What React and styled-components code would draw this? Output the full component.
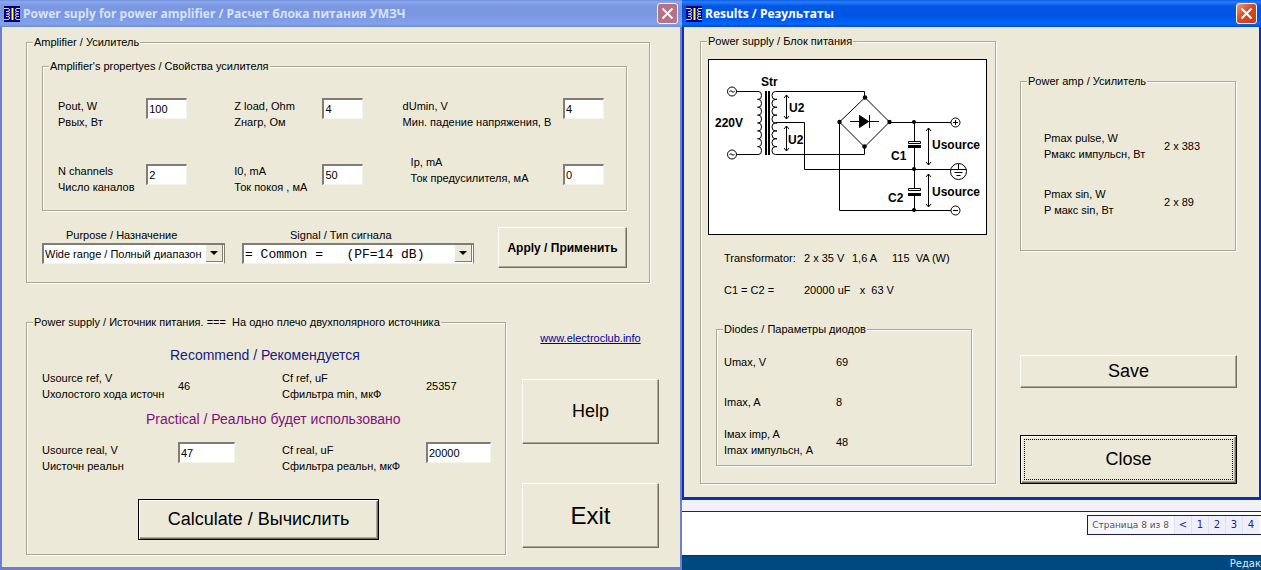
import React from "react";
import styled, { createGlobalStyle, css } from "styled-components";

const GlobalStyle = createGlobalStyle`
  * {
    box-sizing: border-box;
  }

  body {
    margin: 0;
    overflow: hidden;
    background: #fff;
    color: #000;
    font-family: "Liberation Sans", Arial, sans-serif;
    font-size: 11px;
    line-height: 16px;
  }
`;

const Desktop = styled.div`
  display: grid;
  grid-template-columns: minmax(0, 682fr) minmax(0, 579fr);
  min-height: 100vh;
`;

const Side = styled.div`
  display: flex;
  flex-direction: column;
`;

const Window = styled.section`
  display: flex;
  flex-direction: column;
  background: #ece9d8;
  border: solid ${(p) => (p.$active ? "#0831b4" : "#6a7fce")};
  border-width: 0 2px 3px;
`;

const TitleBar = styled.header`
  display: flex;
  align-items: center;
  gap: 3px;
  height: 27px;
  margin: 0 -2px;
  padding: 0 4px;
  color: ${(p) => (p.$active ? "#fff" : "#d8e4f8")};
  background: ${(p) =>
    p.$active
      ? "linear-gradient(#0a5ce8, #2a7df5 2px, #0057e5 6px, #0054e3 16px, #0066ff 24px, #0049c8)"
      : "linear-gradient(#7390dc, #8aa8ee 2px, #7a97e0 6px, #7b99e3 16px, #84a2ec 24px, #6c8cd8)"};
`;

const Title = styled.h1`
  flex: 1;
  margin: 0;
  font-family: "Open Sans", "Trebuchet MS", sans-serif;
  font-size: 12px;
  font-weight: 700;
  line-height: 20px;
  white-space: nowrap;
`;

const CloseBox = styled.button`
  display: flex;
  align-items: center;
  justify-content: center;
  width: 21px;
  height: 21px;
  padding: 0;
  color: #fff;
  border: 1px solid #fff;
  border-radius: 3px;
  background: ${(p) => (p.$active ? "linear-gradient(135deg, #f09a80, #dc4a25 45%, #c83a14)" : "#b8707c")};
  opacity: ${(p) => (p.$active ? 1 : 0.9)};
`;

const MainBody = styled.div`
  display: flex;
  flex-direction: column;
  gap: 32px;
  padding: 8px 21px 12px 24px;
`;

const ResultsBody = styled.div`
  display: grid;
  grid-template-columns: minmax(0, 296fr) minmax(0, 217fr);
  column-gap: 24px;
  padding: 7px 22px 13px 16px;
`;

const Group = styled.fieldset`
  --edge: 0px;
  min-width: 0;
  margin: 0;
  padding: 0 0 0 var(--edge);
  border: 1px solid #aca899;
  box-shadow: 1px 1px 0 #fff, inset 1px 1px 0 #fff;
`;

const Legend = styled.legend`
  margin-left: calc(6px - var(--edge));
  padding: 0 1px;
  line-height: 14px;
  white-space: pre;
  background: #ece9d8;
`;

const AmplifierGroup = styled(Group)`
  --edge: 15px;
  margin-right: 9px;
  padding: 10px 22px 14px var(--edge);
`;

const Properties = styled(Group)`
  --edge: 15px;
  padding: 25px 15px 15px var(--edge);
`;

const PropertyGrid = styled.div`
  display: grid;
  grid-template-columns:
    minmax(0, 88fr) minmax(0, 88fr) minmax(0, 88fr)
    minmax(0, 80fr) minmax(0, 160fr) minmax(0, 48fr);
  grid-template-rows: 32px 41px;
  row-gap: 24px;
`;

const Caption = styled.label`
  align-self: ${(p) => p.$align || "start"};
  padding-left: ${(p) => (p.$indent ? "8px" : 0)};
  white-space: pre;
`;

const Value = styled.output`
  align-self: center;
  white-space: pre;
`;

const Field = styled.input`
  align-self: ${(p) => p.$align || "start"};
  width: ${(p) => p.$width || 41}px;
  height: 21px;
  padding: 0 1px 1px;
  font: inherit;
  color: #000;
  background: #fff;
  border: solid;
  border-width: 2px 1px 1px 2px;
  border-color: #807e72 #f6f4ea #f6f4ea #807e72;
  border-radius: 0;
  outline: 0;
`;

const ModeRow = styled.div`
  display: grid;
  grid-template-columns: minmax(0, 432fr) minmax(0, 129fr);
  column-gap: 24px;
  margin-top: 16px;
`;

const Modes = styled.div`
  display: grid;
  grid-template-columns: minmax(0, 183fr) minmax(0, 232fr);
  column-gap: 17px;
`;

const Mode = styled.div`
  display: flex;
  flex-direction: column;

  label {
    padding-left: ${(p) => p.$indent}px;
  }
`;

const Combo = styled.span`
  display: grid;
  grid-template-columns: minmax(0, 1fr) 18px;
  height: 21px;
  background: #fff;
  border: solid;
  border-width: 2px 1px 1px 2px;
  border-color: #807e72 #807e72 #f6f4ea #807e72;

  select {
    grid-area: 1 / 1 / 2 / 3;
    appearance: none;
    width: 100%;
    padding: 0 18px 0 1px;
    font: ${(p) => (p.$mono ? '13px "Liberation Mono", monospace' : "inherit")};
    color: #000;
    background: transparent;
    border: 0;
    outline: 0;
  }

  svg {
    grid-area: 1 / 2;
    align-self: stretch;
    height: 17px;
    width: 17px;
    background: #ece9d8;
    border-right: 1px solid #807e72;
    border-bottom: 1px solid #807e72;
    pointer-events: none;
  }
`;

const Button = styled.button`
  height: ${(p) => p.$height || 41}px;
  padding: 0;
  font-family: inherit;
  font-size: ${(p) => p.$size || 18}px;
  font-weight: ${(p) => (p.$bold ? 700 : 400)};
  color: #000;
  background: #ece9d8;
  border: 1px solid;
  border-color: #fff #716f64 #716f64 #fff;
  border-radius: 0;
  box-shadow: inset -1px -1px 0 #aca899;
  white-space: nowrap;

  ${(p) =>
    p.$default &&
    css`
      border-color: #000;
      box-shadow: inset 1px 1px 0 #fff, inset -1px -1px 0 #716f64, inset -2px -2px 0 #aca899;
    `}

  ${(p) =>
    p.$focused &&
    css`
      outline: 1px dotted #000;
      outline-offset: -5px;
    `}
`;

const Lower = styled.div`
  display: grid;
  grid-template-columns: minmax(0, 480fr) minmax(0, 137fr);
  column-gap: 16px;
`;

const SupplyGroup = styled(Group)`
  --edge: 15px;
  padding: 18px 15px 14px var(--edge);
`;

const Heading = styled.h2`
  margin: 0;
  padding-left: ${(p) => p.$indent}px;
  color: ${(p) => p.$color};
  font-size: 14px;
  font-weight: 400;
  line-height: 16px;
  white-space: nowrap;
`;

const SupplyRow = styled.div`
  display: grid;
  grid-template-columns: minmax(0, 136fr) minmax(0, 104fr) minmax(0, 144fr) minmax(0, 64fr);
  margin: ${(p) => p.$margin};
`;

const Calculate = styled(Button)`
  display: block;
  width: 241px;
  margin-left: 96px;
`;

const Actions = styled.div`
  display: flex;
  flex-direction: column;
  padding: 15px 0 6px;
`;

const SiteLink = styled.a`
  align-self: center;
  margin-bottom: 33px;
  color: #0000a0;
`;

const Exit = styled(Button)`
  margin-top: 39px;
`;

const OutputGroup = styled(Group)`
  --edge: 7px;
  padding: 11px 8px 16px var(--edge);
`;

const Circuit = styled.svg`
  display: block;
  width: 100%;
  height: auto;
  background: #fff;
  border: 1px solid #000;
  fill: none;
  stroke: #000;

  text {
    fill: #000;
    stroke: none;
    font-weight: 700;
    font-size: 12px;
  }
`;

const OutputRow = styled.div`
  display: grid;
  grid-template-columns: 80px ${(p) => p.$columns};
  margin: 15px 0 16px 16px;
  white-space: pre;
`;

const DiodeGroup = styled(Group)`
  --edge: 7px;
  margin: 24px 15px 0 8px;
  padding: 18px 7px 7px var(--edge);
`;

const DiodeRow = styled.div`
  display: grid;
  grid-template-columns: 112px 1fr;
  margin-bottom: ${(p) => p.$gap || 0}px;
`;

const AmpColumn = styled.div`
  display: flex;
  flex-direction: column;
  padding-top: 40px;
`;

const AmpGroup = styled(Group)`
  --edge: 23px;
  margin-right: 1px;
  padding: 42px 23px 32px var(--edge);
`;

const AmpRow = styled.div`
  display: grid;
  grid-template-columns: 120px 1fr;

  & + & {
    margin-top: 24px;
  }
`;

const Save = styled(Button)`
  margin: 104px 0 47px;
`;

const Forum = styled.footer`
  flex: 1;
  display: flex;
  flex-direction: column;
  font-family: "DejaVu Sans", Verdana, sans-serif;
  font-size: 10px;
  line-height: 18px;
  background: #f2f1fa;
`;

const PagerStrip = styled.nav`
  flex: 1;
  display: flex;
  justify-content: flex-end;
  align-items: flex-start;
  margin-top: 11px;
  padding-top: 3px;
  overflow: hidden;
  background: #fff;
  border: solid #1b2a5c;
  border-width: 1px 0;
`;

const Pager = styled.div`
  display: flex;
  padding-right: 2px;
  background: #f7f7fb;
  border: 1px solid #1b1b5c;
  border-right: 0;
  color: #555;

  span {
    padding: 0 5px 0 4px;
    font-size: 9px;
    white-space: nowrap;
  }

  a {
    width: 17px;
    color: #22229c;
    text-align: center;
    text-decoration: none;
    background: #efeffa;
    border-left: 1px solid #e0e0ee;
  }
`;

const BlueStrip = styled.div`
  height: 14px;
  padding-top: 2px;
  overflow: hidden;
  color: #d8ecff;
  line-height: 12px;
  text-align: right;
  background: #004880;
`;

function CoilIcon() {
  return (
    <svg width="16" height="16" viewBox="0 0 16 16" fill="none" stroke="#d8dcf0" aria-hidden="true">
      <path fill="#00007c" stroke="none" d="M0 0h16v16H0z" />
      <path d="M0 2.500h4q1.500 0 1.500 1.500t-2.500 1.500M2 5.500h2q1.500 0 1.500 1.250T3 8h-1M3 8h1q1.500 0 1.500 1.250T3.500 10.500H2M4 10.500q1.500 0 1.500 1.500t-1.500 1.500H0" />
      <path d="M16 2.500h-3q-1.500 0-1.500 1.500t2.500 1.500M15 5.500h-2q-1.500 0-1.500 1.250T14 8h1M14 8h-1q-1.500 0-1.500 1.250T13.500 10.500H15M13 10.500q-1.500 0-1.500 1.500t1.500 1.500H16" />
      <path stroke="#ffff3c" strokeWidth="2" d="M8.500 2v12" />
    </svg>
  );
}

function CrossIcon() {
  return (
    <svg width="13" height="13" viewBox="0 0 13 13" stroke="currentColor" strokeWidth="2" aria-hidden="true">
      <path d="M1.500 1.500l10 10M11.500 1.500l-10 10" />
    </svg>
  );
}

function ComboArrow() {
  return (
    <svg viewBox="0 0 16 16" aria-hidden="true">
      <path d="M4 6h8l-4 4z" />
    </svg>
  );
}

function Arrow({ x, from, to }) {
  return (
    <path
      d={`M${x} ${from}V${to}M${x - 2.5} ${from + 3}L${x} ${from}l2.500 3M${x - 2.5} ${to - 3}L${x} ${to}l2.500-3`}
    />
  );
}

function CircuitDrawing() {
  const turns = [0, 1, 2, 3, 4, 5, 6, 7];
  return (
    <Circuit viewBox="9 10 277 174" role="img" aria-label="Power supply circuit">
      {/* mains input */}
      {[41.5, 104.5].map((y) => (
        <g key={y}>
          <circle cx="32" cy={y} r="4.500" />
          <path d={`M29.500 ${y + 0.5}q1.200-2.500 2.500-0.500t2.500-0.500M36.500 ${y}H59`} />
        </g>
      ))}
      {/* transformer */}
      {turns.map((n) => (
        <path key={n} d={`M57.500 ${41.5 + n * 7.875}h1a3 3.900 0 0 1 0 7.875h-1`} />
      ))}
      {turns.map((n) => (
        <path key={n} d={`M77 ${41.5 + n * 7.875}h-1.500a3.500 3.900 0 0 0 0 7.875h1.500`} />
      ))}
      <path strokeWidth="2" d="M66 41v64M69 41v64" />
      <Arrow x={86.5} from={45} to={69} />
      <Arrow x={86.5} from={76} to={101} />
      {/* wires */}
      <path d="M76 41.500H164.500V48M76 104.500H164.500V97M76 72.500H104.500V119.500H251M139.500 72V160.500H251M189 72.500H251" />
      {/* bridge */}
      <path d="M165 47.500L189.500 72 164.500 97 139.500 72z" />
      <path d="M150 71.500h29M169.500 65v13" />
      <path fill="#000" d="M159.500 65.500v12l9-6z" />
      {/* filter */}
      <path d="M214.500 72v19M214.500 98v40M214.500 146v15M208.500 91.500h12v2h-12zM208.500 138.500h12v2h-12z" />
      <path fill="#000" stroke="none" d="M208 95h13v3h-13zM208 143h13v3h-13z" />
      <g fill="#000" stroke="none">
        <circle cx="165" cy="47.500" r="2.200" />
        <circle cx="189.500" cy="72" r="2.200" />
        <circle cx="164.500" cy="96.500" r="2.200" />
        <circle cx="139.500" cy="72" r="2.200" />
        <circle cx="214" cy="72" r="2" />
        <circle cx="214" cy="119" r="2" />
        <circle cx="214" cy="160" r="2" />
      </g>
      <Arrow x={228.5} from={78} to={115} />
      <Arrow x={228.5} from={124} to={157} />
      {/* outputs */}
      <circle cx="255.500" cy="72.500" r="4.500" />
      <path d="M253 72.500h5M255.500 70v5" />
      <circle cx="258.500" cy="121.500" r="8" />
      <path d="M250 119.500h16.500M258.500 114v6M254.500 122.500h8M256.500 125.500h4" />
      <circle cx="255.500" cy="160.500" r="4.500" />
      <path d="M253 160.500h5" />
      <text x="61" y="36">Str</text>
      <text x="15" y="77">220V</text>
      <text x="89" y="62">U2</text>
      <text x="88" y="94">U2</text>
      <text x="191" y="110">C1</text>
      <text x="188" y="152">C2</text>
      <text x="232" y="99">Usource</text>
      <text x="232" y="146">Usource</text>
    </Circuit>
  );
}

function Property({ id, text, value, row, indent }) {
  return (
    <>
      <Caption htmlFor={id} $align={row === 2 && !indent ? "end" : "start"} $indent={indent}>
        {text}
      </Caption>
      <Field id={id} defaultValue={value} $align={row === 2 ? "center" : "start"} />
    </>
  );
}

function MainWindow() {
  return (
    <Window>
      <TitleBar>
        <CoilIcon />
        <Title>Power suply for power amplifier / Расчет блока питания УМЗЧ</Title>
        <CloseBox type="button" aria-label="Close window">
          <CrossIcon />
        </CloseBox>
      </TitleBar>
      <MainBody>
        <AmplifierGroup>
          <Legend>Amplifier / Усилитель</Legend>
          <Properties>
            <Legend>Amplifier's propertyes / Свойства усилителя</Legend>
            <PropertyGrid>
              <Property id="pout" text={"Pout, W\nPвых, Вт"} value="100" row={1} />
              <Property id="zload" text={"Z load, Ohm\nZнагр, Ом"} value="4" row={1} />
              <Property id="dumin" text={"dUmin, V\nМин. падение напряжения, В"} value="4" row={1} />
              <Property id="channels" text={"N channels\nЧисло каналов"} value="2" row={2} />
              <Property id="i0" text={"I0, mA\nТок покоя , мА"} value="50" row={2} />
              <Property id="ip" text={"Ip, mA\nТок предусилителя, мА"} value="0" row={2} indent />
            </PropertyGrid>
          </Properties>
          <ModeRow>
            <Modes>
              <Mode $indent={24}>
                <label htmlFor="purpose">Purpose / Назначение</label>
                <Combo>
                  <select id="purpose">
                    <option>Wide range / Полный диапазон</option>
                  </select>
                  <ComboArrow />
                </Combo>
              </Mode>
              <Mode $indent={48}>
                <label htmlFor="signal">Signal / Тип сигнала</label>
                <Combo $mono>
                  <select id="signal">
                    <option>{"= Common =\u00a0\u00a0\u00a0(PF=14 dB)"}</option>
                  </select>
                  <ComboArrow />
                </Combo>
              </Mode>
            </Modes>
            <Button type="button" $size={12} $bold>
              Apply / Применить
            </Button>
          </ModeRow>
        </AmplifierGroup>
        <Lower>
          <SupplyGroup>
            <Legend>{"Power supply / Источник питания. ===  На одно плечо двухполярного источника"}</Legend>
            <Heading $indent={128} $color="#1a1a80">
              Recommend / Рекомендуется
            </Heading>
            <SupplyRow $margin="7px 0 9px">
              <Caption as="span">{"Usource ref, V\nUхолостого хода источн"}</Caption>
              <Value>46</Value>
              <Caption as="span">{"Cf ref, uF\nCфильтра min, мкФ"}</Caption>
              <Value>25357</Value>
            </SupplyRow>
            <Heading $indent={104} $color="#80107c">
              Practical / Реально будет использовано
            </Heading>
            <SupplyRow $margin="15px 0 25px">
              <Caption htmlFor="usource">{"Usource real, V\nUисточн реальн"}</Caption>
              <Field id="usource" defaultValue="47" $width={57} />
              <Caption htmlFor="cf">{"Cf real, uF\nCфильтра реальн, мкФ"}</Caption>
              <Field id="cf" defaultValue="20000" $width={65} />
            </SupplyRow>
            <Calculate type="button" $default>
              Calculate / Вычислить
            </Calculate>
          </SupplyGroup>
          <Actions>
            <SiteLink href="#site">www.electroclub.info</SiteLink>
            <Button type="button" $height={65}>
              Help
            </Button>
            <Exit type="button" $height={65} $size={24}>
              Exit
            </Exit>
          </Actions>
        </Lower>
      </MainBody>
    </Window>
  );
}

function ResultsWindow() {
  return (
    <Window $active>
      <TitleBar $active>
        <CoilIcon />
        <Title>Results / Результаты</Title>
        <CloseBox type="button" aria-label="Close results" $active>
          <CrossIcon />
        </CloseBox>
      </TitleBar>
      <ResultsBody>
        <OutputGroup>
          <Legend>Power supply / Блок питания</Legend>
          <CircuitDrawing />
          <OutputRow $columns="48px 40px 1fr">
            <span>Transformator:</span>
            <span>2 x 35 V</span>
            <span>1,6 A</span>
            <span>{"115  VA (W)"}</span>
          </OutputRow>
          <OutputRow $columns="1fr">
            <span>C1 = C2 =</span>
            <span>{"20000 uF   x  63 V"}</span>
          </OutputRow>
          <DiodeGroup>
            <Legend>Diodes / Параметры диодов</Legend>
            <DiodeRow $gap={24}>
              <span>Umax, V</span>
              <Value>69</Value>
            </DiodeRow>
            <DiodeRow $gap={16}>
              <span>Imax, A</span>
              <Value>8</Value>
            </DiodeRow>
            <DiodeRow>
              <Caption as="span">{"Iмах imp, A\nImax импульсн, А"}</Caption>
              <Value>48</Value>
            </DiodeRow>
          </DiodeGroup>
        </OutputGroup>
        <AmpColumn>
          <AmpGroup>
            <Legend>Power amp / Усилитель</Legend>
            <AmpRow>
              <Caption as="span">{"Pmax pulse, W\nPмакс импульсн, Вт"}</Caption>
              <Value>2 x 383</Value>
            </AmpRow>
            <AmpRow>
              <Caption as="span">{"Pmax sin, W\nP макс sin, Вт"}</Caption>
              <Value>2 x 89</Value>
            </AmpRow>
          </AmpGroup>
          <Save type="button" $height={33}>
            Save
          </Save>
          <Button type="button" $height={49} $default $focused>
            Close
          </Button>
        </AmpColumn>
      </ResultsBody>
    </Window>
  );
}

export default function App() {
  return (
    <>
      <GlobalStyle />
      <Desktop>
        <MainWindow />
        <Side>
          <ResultsWindow />
          <Forum>
            <PagerStrip>
              <Pager>
                <span>Страница 8 из 8</span>
                {["<", "1", "2", "3", "4"].map((page) => (
                  <a key={page} href={`#page-${page}`}>
                    {page}
                  </a>
                ))}
              </Pager>
            </PagerStrip>
            <BlueStrip>Редак</BlueStrip>
          </Forum>
        </Side>
      </Desktop>
    </>
  );
}
